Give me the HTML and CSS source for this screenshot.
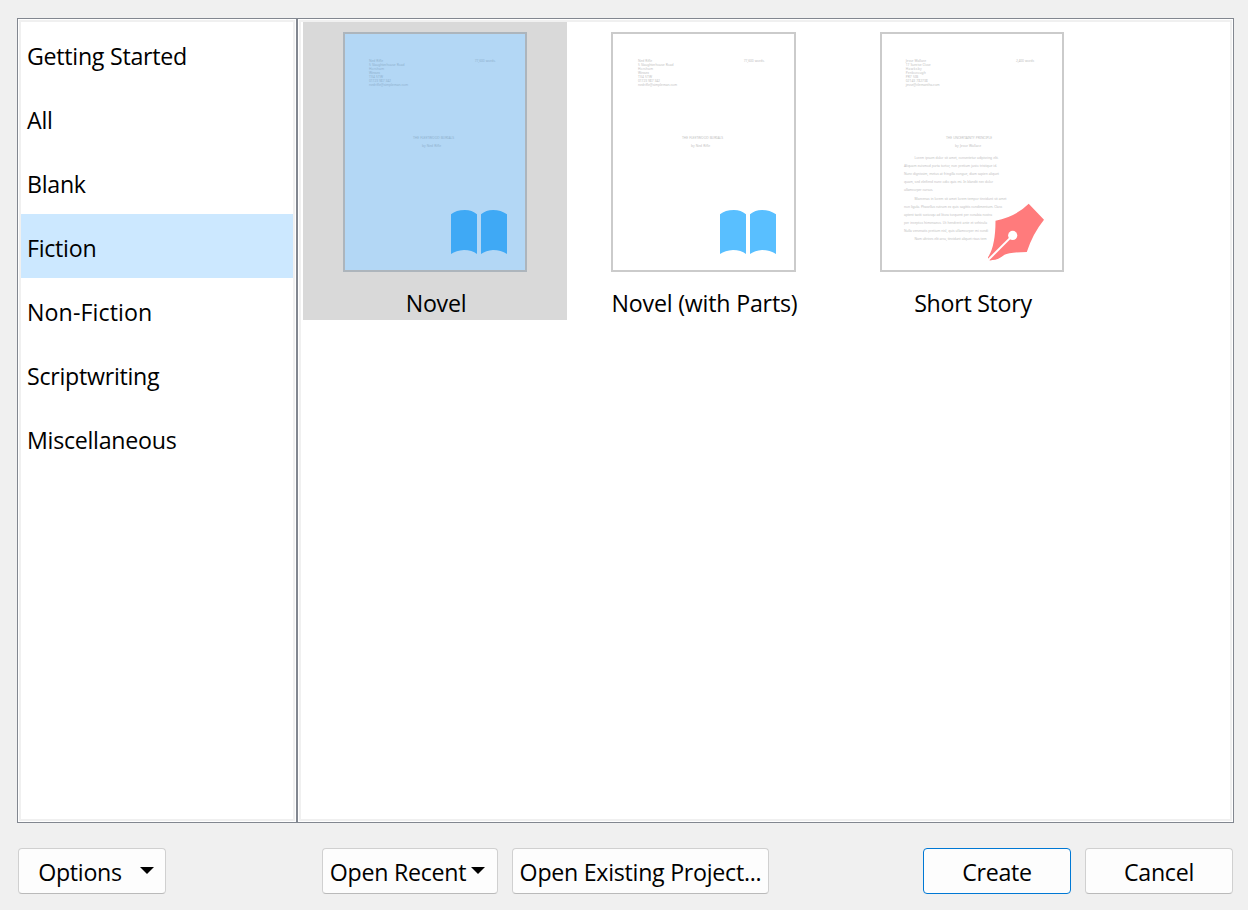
FILE: index.html
```html
<!DOCTYPE html>
<html lang="en">
<head>
<meta charset="utf-8">
<title>Project Templates</title>
<link rel="stylesheet" href="styles.css">
</head>
<body>
<main class="dialog">
  <div class="panels">
    <nav class="panel categories">
      <div class="category">Getting Started</div>
      <div class="category">All</div>
      <div class="category">Blank</div>
      <div class="category active">Fiction</div>
      <div class="category hyphenated">Non-Fiction</div>
      <div class="category">Scriptwriting</div>
      <div class="category">Miscellaneous</div>
    </nav>
    <section class="panel templates">
      <div class="tile selected">
        <svg class="thumb" width="184" height="240" viewBox="0 0 184 240">
          <rect class="page" x="1" y="1" width="182" height="238"/>
          <g class="copy">
            <text x="26" y="29.5" textLength="14">Ned Rifle</text>
            <text x="26" y="33.6" textLength="35.5">5 Slaughterhouse Road</text>
            <text x="26" y="37.6" textLength="15">Horsham</text>
            <text x="26" y="41.7" textLength="11">Wessex</text>
            <text x="26" y="45.7" textLength="14">TX4 5TW</text>
            <text x="26" y="49.8" textLength="22">01723 987 342</text>
            <text x="26" y="53.8" textLength="39">nedrifle@simpleman.com</text>
            <text x="131.7" y="29.5" textLength="21">77,600 words.</text>
            <text x="70" y="106.6" textLength="41">THE FLEETWOOD BURIALS</text>
            <text x="79" y="114.8" textLength="19">by Ned Rifle</text>
          </g>
          <path class="book" d="M108 182.3Q113 178 122 178Q129 178 134 182.3V222Q129 218 121 218Q113 218.4 108 222ZM138 182.3Q143 178 150 178Q158 178 164 182.3V222Q158 218 150 218Q143 218.4 138 222Z"/>
        </svg>
        <span class="name">Novel</span>
      </div>
      <div class="tile second">
        <svg class="thumb" width="185" height="240" viewBox="-1 0 185 240">
          <rect class="page" x="0" y="1" width="183" height="238"/>
          <g class="copy">
            <text x="26" y="29.5" textLength="14">Ned Rifle</text>
            <text x="26" y="33.6" textLength="35.5">5 Slaughterhouse Road</text>
            <text x="26" y="37.6" textLength="15">Horsham</text>
            <text x="26" y="41.7" textLength="11">Wessex</text>
            <text x="26" y="45.7" textLength="14">TX4 5TW</text>
            <text x="26" y="49.8" textLength="22">01723 987 342</text>
            <text x="26" y="53.8" textLength="39">nedrifle@simpleman.com</text>
            <text x="131.7" y="29.5" textLength="21">77,600 words.</text>
            <text x="70" y="106.6" textLength="41">THE FLEETWOOD BURIALS</text>
            <text x="79" y="114.8" textLength="19">by Ned Rifle</text>
          </g>
          <path class="book" d="M108 182.3Q113 178 122 178Q129 178 134 182.3V222Q129 218 121 218Q113 218.4 108 222ZM138 182.3Q143 178 150 178Q158 178 164 182.3V222Q158 218 150 218Q143 218.4 138 222Z"/>
        </svg>
        <span class="name parts">Novel (with Parts)</span>
      </div>
      <div class="tile">
        <svg class="thumb" width="184" height="240" viewBox="0 0 184 240">
          <rect class="page" x="1" y="1" width="182" height="238"/>
          <g class="copy">
            <text x="25.7" y="29.5" textLength="20.5">Jesse Wallace</text>
            <text x="25.7" y="33.6" textLength="25">17 Sunrise Close</text>
            <text x="25.7" y="37.6" textLength="16">Hawksby</text>
            <text x="25.7" y="41.7" textLength="20">Penborough</text>
            <text x="25.7" y="45.7" textLength="12.5">PR7 5IB</text>
            <text x="25.7" y="49.8" textLength="22">02143 782738</text>
            <text x="25.7" y="53.8" textLength="34">jesse@clemantha.com</text>
            <text x="136" y="29.5" textLength="18">2,400 words</text>
            <text x="66" y="106.6" textLength="46">THE UNCERTAINTY PRINCIPLE</text>
            <text x="75" y="114.8" textLength="26">by Jesse Wallace</text>
            <text x="34.5" y="126.8" textLength="84">Lorem ipsum dolor sit amet, consectetur adipiscing elit.</text>
            <text x="24" y="134.9" textLength="93">Aliquam euismod porta tortor, non pretium justo tristique id.</text>
            <text x="24" y="143" textLength="95">Nunc dignissim, metus at fringilla congue, diam sapien aliquet</text>
            <text x="24" y="151.2" textLength="89">quam, sed eleifend nunc odio quis mi. In blandit nec dolor</text>
            <text x="24" y="159.3" textLength="29">ullamcorper cursus.</text>
            <text x="34.5" y="167.5" textLength="92">Maecenas in lorem sit amet lorem tempor tincidunt sit amet</text>
            <text x="24" y="175.6" textLength="98">non ligula. Phasellus rutrum ex quis sagittis condimentum. Class</text>
            <text x="24" y="183.7" textLength="88">aptent taciti sociosqu ad litora torquent per conubia nostra</text>
            <text x="24" y="191.8" textLength="83">per inceptos himenaeos. Ut hendrerit ante et vehicula</text>
            <text x="24" y="199.9" textLength="84">Nulla venenatis pretium nisl, quis ullamcorper mi condi</text>
            <text x="34.5" y="208.1" textLength="72">Nam ultrices elit arcu, tincidunt aliquet risus tem</text>
          </g>
          <path class="pen" d="M148.7 171.8L164 187.7Q152.5 202 146.8 220Q129 220.3 124.5 222.8Q118 228 112.5 228Q109 229.2 108 227V225.2Q115.5 214 115.5 188.8Q136 184.5 148.7 171.8Z"/>
          <path class="slit" d="M107.4 228.7L132.7 203.4"/>
          <circle class="hole" cx="132.7" cy="203.4" r="4.6"/>
        </svg>
        <span class="name">Short Story</span>
      </div>
    </section>
  </div>
  <footer class="actions">
    <button class="button options">Options<svg class="arrow" width="14" height="7" viewBox="0 0 14 7"><path d="M0 0H14L7 7Z"/></svg></button>
    <button class="button recent">Open Recent<svg class="arrow" width="14" height="7" viewBox="0 0 14 7"><path d="M0 0H14L7 7Z"/></svg></button>
    <button class="button existing">Open Existing Project...</button>
    <button class="button create">Create</button>
    <button class="button cancel">Cancel</button>
  </footer>
</main>
</body>
</html>
```
FILE: styles.css
```css
* { box-sizing: border-box; }

body {
  margin: 0;
  background: #f0f0f0;
  color: #000;
  font-family: "Open Sans", "Noto Sans", sans-serif;
  font-size: 23.2px;
  letter-spacing: -0.27px;
}

.dialog {
  width: 1248px;
  height: 910px;
  padding: 18px 14px 16px 17px;
  display: flex;
  flex-direction: column;
  justify-content: space-between;
}

.panels {
  display: flex;
  height: 805px;
}

.panel {
  border: 1px solid #828790;
  background: #fff;
  padding: 3px;
  box-shadow: inset 0 0 0 1px #fff, inset 0 0 0 3px #f0f0f0;
}

.categories { width: 280px; }

.category {
  height: 64px;
  padding-left: 6px;
  line-height: 68px;
  white-space: nowrap;
}

.category.active { background: #cce8ff; }
.category.hyphenated { letter-spacing: 0.1px; }

.templates {
  width: 937px;
  padding-left: 5px;
  display: flex;
  align-items: flex-start;
  gap: 4px;
}

.tile {
  width: 264px;
  height: 298px;
  padding-top: 10px;
  display: flex;
  flex-direction: column;
  align-items: center;
}

.tile.selected { background: #d9d9d9; }
.tile.second { width: 265px; }

.thumb { display: block; }

.name {
  line-height: 30px;
  margin-top: 16px;
  padding-left: 2px;
  white-space: nowrap;
}

.name.parts { letter-spacing: -0.2px; }

.page {
  fill: #fff;
  stroke: #cbcbcb;
  stroke-width: 2;
}

.copy {
  fill: #c2c2c2;
  font-family: "Noto Sans", sans-serif;
  font-size: 3.3px;
  letter-spacing: 0;
  word-spacing: 0.3px;
}

.book { fill: #59bfff; }
.selected .page { fill: #b3d7f5; stroke: #adb5bc; }
.selected .copy { fill: #8fb1ce; }
.selected .book { fill: #3fa9f5; }

.pen { fill: #ff7b7c; }
.slit { stroke: #fff; stroke-width: 2; }
.hole { fill: #fff; }

.actions {
  display: flex;
  height: 46px;
  padding-left: 1px;
}

.button {
  display: flex;
  align-items: center;
  justify-content: center;
  height: 46px;
  padding: 2px 0 0;
  background: #fdfdfd;
  border: 1px solid #d0d0d0;
  border-bottom-color: #bababa;
  border-radius: 4px;
  font: inherit;
  letter-spacing: inherit;
  color: inherit;
  white-space: nowrap;
}

.arrow {
  margin-top: -3px;
  fill: #000;
}

.options { width: 148px; gap: 18px; padding-left: 8px; }
.recent { width: 176px; gap: 5px; margin-left: 156px; padding-right: 5px; }
.existing { width: 257px; margin-left: 14px; }
.create { width: 148px; margin-left: auto; border-color: #0078d4; }
.cancel { width: 148px; margin-left: 14px; margin-right: 1px; }
```
